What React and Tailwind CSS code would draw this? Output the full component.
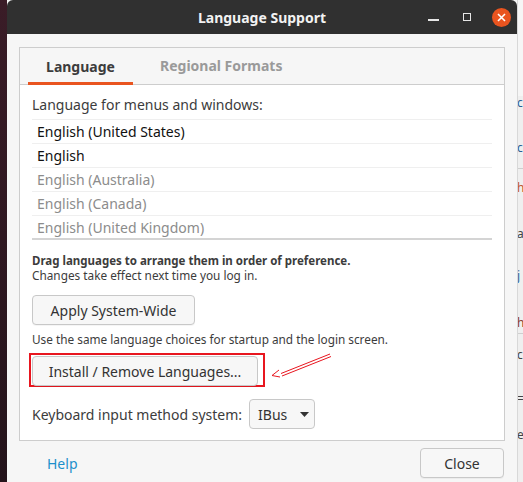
import React from "react";

const font = { fontFamily: "'Noto Sans', 'Open Sans', sans-serif" };

const languages = [
  { name: "English (United States)", active: true },
  { name: "English", active: true },
  { name: "English (Australia)", active: false },
  { name: "English (Canada)", active: false },
  { name: "English (United Kingdom)", active: false },
];

function TitleBar() {
  return (
    <div className="relative h-[34px] bg-[#303030] rounded-t-[6px] flex items-center justify-center shrink-0">
      <span className="text-[14px] font-bold text-[#f2f2f2]">Language Support</span>
      <div className="absolute right-[6px] top-0 h-full flex items-center">
        <div className="w-[11px] h-[2px] bg-[#e6e6e6] mt-[5px]" />
        <div className="ml-[24px] w-[8px] h-[8px] border-[1.5px] border-[#e6e6e6] -mt-[1px]" />
        <div className="ml-[21px] w-[19px] h-[19px] rounded-full bg-[#e9541f] flex items-center justify-center">
          <svg width="9" height="9" viewBox="0 0 9 9">
            <path d="M1 1L8 8M8 1L1 8" stroke="#fff" strokeWidth="1.6" />
          </svg>
        </div>
      </div>
    </div>
  );
}

function Button({ children, className }) {
  return (
    <div
      className={
        "flex items-center justify-center rounded-[4px] border border-[#c8c8c8] bg-[#f7f7f7] text-[14px] text-[#333] shadow-[0_1px_0_rgba(0,0,0,0.04)] " +
        className
      }
    >
      {children}
    </div>
  );
}

export default function App() {
  return (
    <div className="w-[523px] h-[482px] flex overflow-hidden bg-[#2a161e]" style={font}>
      <div className="w-[7px] h-full bg-gradient-to-b from-[#3a1c27] to-[#24141b]" />
      <div className="w-[510px] h-full flex flex-col bg-[#f6f6f6] relative">
        <TitleBar />
        <div className="flex-1 flex flex-col px-[12px] pt-[13px]">
          <div className="border border-[#cdcdcd] bg-white flex flex-col h-[394px]">
            <div className="h-[37px] bg-[#f6f6f6] border-b border-[#cdcdcd] flex items-end px-[8px]">
              <div className="w-[105px] h-full flex items-center justify-center text-[14px] font-bold text-[#3c3c3c] border-b-[3px] border-[#e9541f] -mb-[1px]">
                <span className="mt-[2px]">Language</span>
              </div>
              <div className="h-full flex items-center pl-[27px] text-[14px] font-bold text-[#9a9a9a]">
                <span className="-mt-[1px]">Regional Formats</span>
              </div>
            </div>
            <div className="flex flex-col px-[12px] pt-[11px]">
              <div className="text-[14px] text-[#3c3c3c] leading-[18px]">Language for menus and windows:</div>
              <div className="mt-[5px] border-t border-[#efefef] w-[460px]">
                {languages.map((l, i) => (
                  <div
                    key={l.name}
                    className={
                      "h-[24px] flex items-center px-[5px] text-[14px] border-b " +
                      (i === languages.length - 1 ? "border-[#d4d4d4] border-b-2" : "border-[#efefef]") +
                      (l.active ? " text-[#111]" : " text-[#8c8c8c]")
                    }
                  >
                    {l.name}
                  </div>
                ))}
              </div>
              <div className="mt-[13px] text-[11.5px] font-bold text-[#3c3c3c] leading-[15px]">
                Drag languages to arrange them in order of preference.
              </div>
              <div className="text-[11.8px] text-[#3c3c3c] leading-[15px]">Changes take effect next time you log in.</div>
              <Button className="mt-[12px] w-[163px] h-[30px]">Apply System-Wide</Button>
              <div className="mt-[6px] text-[11.8px] text-[#3c3c3c] leading-[16px]">
                Use the same language choices for startup and the login screen.
              </div>
              <div className="mt-[6px] relative w-[236px] h-[34px] border-2 border-[#e8161f] -ml-[3px] pl-[1px] pt-[1px]">
                <Button className="w-[226px] h-[30px]">Install / Remove Languages...</Button>
              </div>
              <div className="mt-[12px] flex items-center">
                <span className="text-[14px] text-[#3c3c3c]">Keyboard input method system:</span>
                <div className="ml-[7px] w-[66px] h-[30px] rounded-[4px] border border-[#c8c8c8] bg-[#f7f7f7] flex items-center pl-[8px] text-[14px] text-[#333]">
                  IBus
                  <svg className="ml-[13px]" width="9" height="5" viewBox="0 0 9 5">
                    <path d="M0 0H9L4.5 5Z" fill="#333" />
                  </svg>
                </div>
              </div>
            </div>
          </div>
          <div className="flex items-center justify-between mt-[7px] pl-[28px] pr-[1px]">
            <span className="text-[14px] text-[#1c8fcb]">Help</span>
            <Button className="w-[84px] h-[30px]">Close</Button>
          </div>
        </div>
        <svg className="absolute left-[262px] top-[353px]" width="64" height="26" viewBox="0 0 64 26">
          <path d="M61 1L12 20.5M62 3.5L13 23" stroke="#e8161f" strokeWidth="1" fill="none" />
          <path d="M10 17L3 22.5L11 24" stroke="#e8161f" strokeWidth="1" fill="none" />
        </svg>
      </div>
      <div className="w-[6px] h-full bg-[#efefef] border-l border-[#d8d8d8] flex flex-col text-[12px] leading-[14px] overflow-hidden">
        <div className="h-[96px] bg-[#f6f6f6]" />
        <div className="text-[#2a5f95] -ml-[1px]">c</div>
        <div className="h-[31px]" />
        <div className="text-[#2a5f95] -ml-[1px]">c</div>
        <div className="h-[14px] border-b border-[#cfcfcf]" />
        <div className="h-[12px]" />
        <div className="text-[#c0552a] -ml-[1px]">h</div>
        <div className="h-[32px]" />
        <div className="text-[#444] -ml-[1px]">a</div>
        <div className="h-[28px]" />
        <div className="text-[#2a5f95] -ml-[1px]">j</div>
        <div className="h-[33px]" />
        <div className="text-[#8a3b2a] -ml-[1px]">h</div>
        <div className="h-[4px] border-b border-[#cfcfcf]" />
        <div className="h-[14px]" />
        <div className="text-[#444] -ml-[1px]">c</div>
        <div className="h-[30px]" />
        <div className="text-[#444] -ml-[1px]">=</div>
        <div className="h-[22px]" />
        <div className="text-[#444] -ml-[1px]">e</div>
      </div>
    </div>
  );
}
